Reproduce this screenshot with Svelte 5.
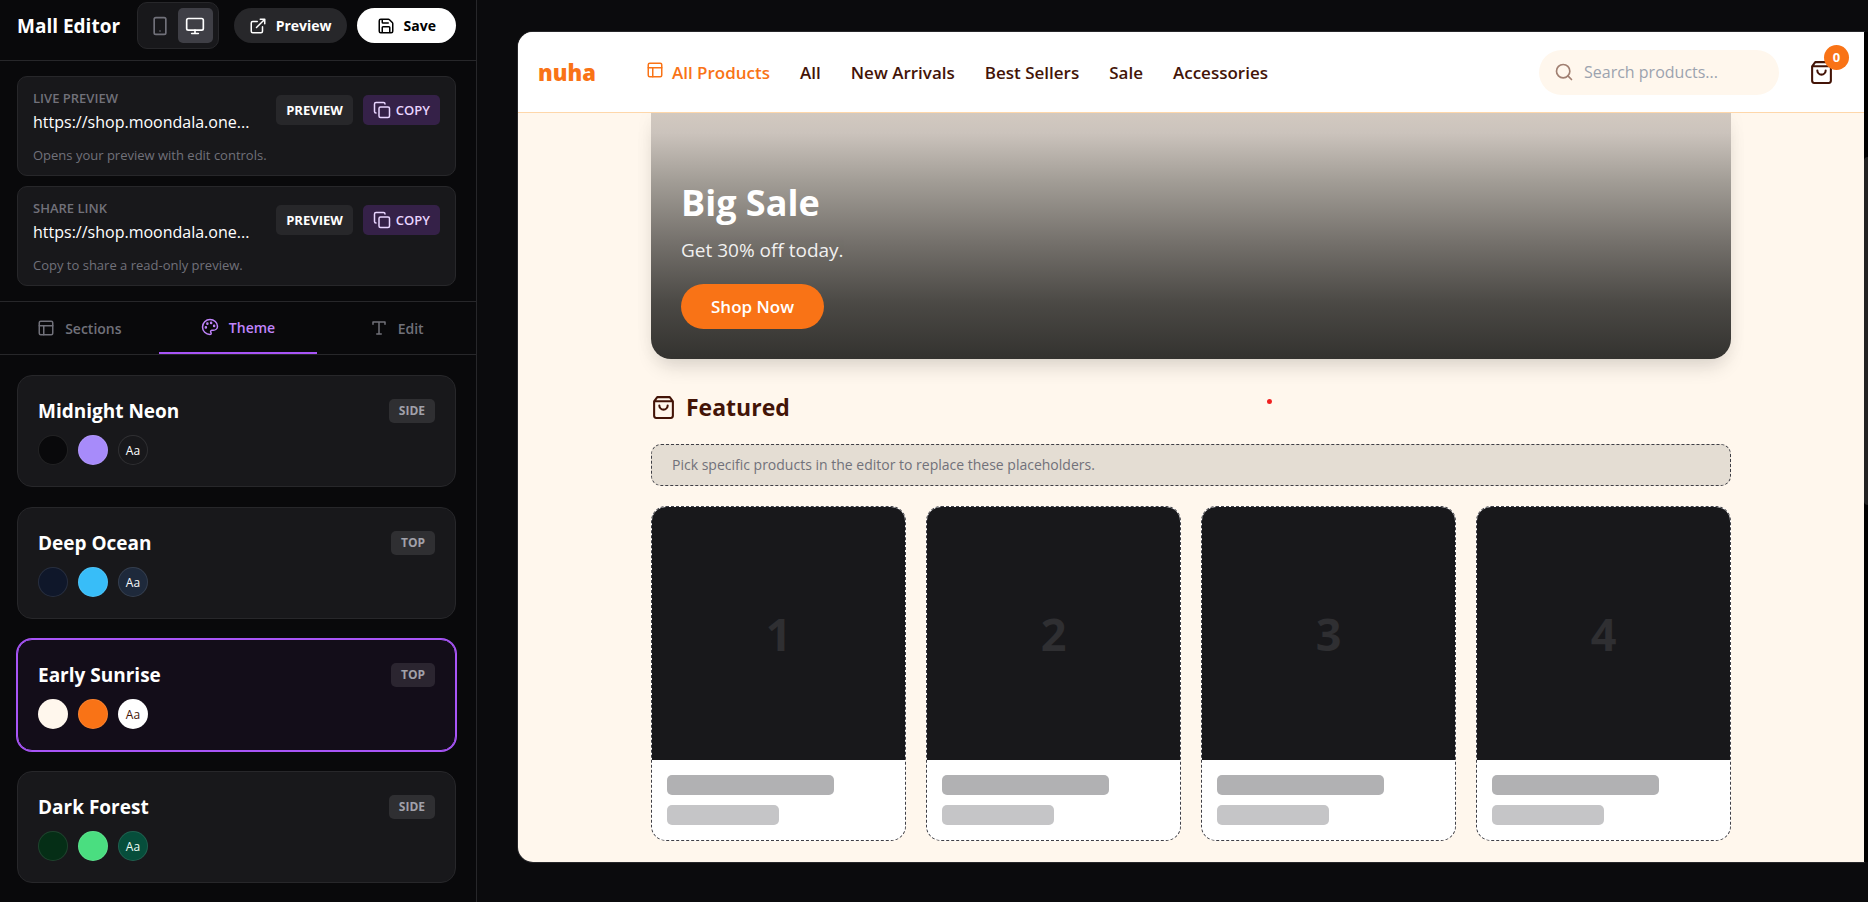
<script>
  const links = [
    { id: 'live', label: 'LIVE PREVIEW', url: 'https://shop.moondala.one...', note: 'Opens your preview with edit controls.' },
    { id: 'share', label: 'SHARE LINK', url: 'https://shop.moondala.one...', note: 'Copy to share a read-only preview.' }
  ];
  const themes = [
    { name: 'Midnight Neon', layout: 'SIDE', bg: '#09090b', primary: '#a78bfa', card: '#18181b', text: '#ffffff' },
    { name: 'Deep Ocean', layout: 'TOP', bg: '#0f172a', primary: '#38bdf8', card: '#1e293b', text: '#f8fafc' },
    { name: 'Early Sunrise', layout: 'TOP', bg: '#fff7ed', primary: '#f97316', card: '#ffffff', text: '#431407' },
    { name: 'Dark Forest', layout: 'SIDE', bg: '#052e16', primary: '#4ade80', card: '#064e3b', text: '#ecfdf5' }
  ];
  const nav = ['All', 'New Arrivals', 'Best Sellers', 'Sale', 'Accessories'];
  const slots = [1, 2, 3, 4];
  let selected = $state('Early Sunrise');
</script>

{#snippet layoutIcon(size)}
  <svg width={size} height={size} viewBox="0 0 24 24"><rect x="3" y="3" width="18" height="18" rx="2" /><path d="M3 9h18M9 21V9" /></svg>
{/snippet}

{#snippet bagIcon()}
  <svg width="25" height="25" viewBox="0 0 24 24"><path d="M6 2 3 6v14a2 2 0 0 0 2 2h14a2 2 0 0 0 2-2V6l-3-4ZM3 6h18M16 10a4 4 0 0 1-8 0" /></svg>
{/snippet}

<div class="app">
  <aside class="sidebar">
    <header class="toolbar">
      <h1>Mall Editor</h1>
      <div class="devices">
        <button class="device" aria-label="Mobile view">
          <svg width="20" height="20" viewBox="0 0 24 24"><rect x="5" y="2" width="14" height="20" rx="2" /><path d="M12 18h.01" /></svg>
        </button>
        <button class="device on" aria-label="Desktop view">
          <svg width="20" height="20" viewBox="0 0 24 24"><rect x="2" y="3" width="20" height="14" rx="2" /><path d="M8 21h8M12 17v4" /></svg>
        </button>
      </div>
      <div class="actions">
        <button class="pill">
          <svg width="18" height="18" viewBox="0 0 24 24"><path d="M15 3h6v6M10 14 21 3M18 13v6a2 2 0 0 1-2 2H5a2 2 0 0 1-2-2V8a2 2 0 0 1 2-2h6" /></svg>
          Preview
        </button>
        <button class="pill save">
          <svg width="18" height="18" viewBox="0 0 24 24"><path d="M15.2 3a2 2 0 0 1 1.4.6l3.8 3.8a2 2 0 0 1 .6 1.4V19a2 2 0 0 1-2 2H5a2 2 0 0 1-2-2V5a2 2 0 0 1 2-2zM17 21v-7a1 1 0 0 0-1-1H8a1 1 0 0 0-1 1v7M7 3v4a1 1 0 0 0 1 1h7" /></svg>
          Save
        </button>
      </div>
    </header>

    <section class="links">
      {#each links as link (link.id)}
        <article class="link-card">
          <div class="link-row">
            <div class="link-text">
              <div class="link-label">{link.label}</div>
              <div class="link-url">{link.url}</div>
            </div>
            <a class="chip open" href="#preview">PREVIEW</a>
            <button class="chip copy">
              <svg width="18" height="18" viewBox="0 0 24 24"><rect x="8" y="8" width="14" height="14" rx="2" /><path d="M4 16c-1.100 0-2-.9-2-2V4c0-1.100.9-2 2-2h10c1.100 0 2 .9 2 2" /></svg>
              COPY
            </button>
          </div>
          <p>{link.note}</p>
        </article>
      {/each}
    </section>

    <nav class="tabs">
      <button class="tab">{@render layoutIcon(18)}Sections</button>
      <button class="tab on">
        <svg width="18" height="18" viewBox="0 0 24 24"><circle cx="13.5" cy="6.500" r=".7" /><circle cx="17.500" cy="10.500" r=".7" /><circle cx="8.500" cy="7.500" r=".7" /><circle cx="6.500" cy="12.500" r=".7" /><path d="M12 2C6.500 2 2 6.500 2 12s4.500 10 10 10c.926 0 1.648-.746 1.648-1.688 0-.437-.18-.835-.437-1.125-.29-.289-.438-.652-.438-1.125a1.640 1.640 0 0 1 1.668-1.668h1.996c3.051 0 5.555-2.503 5.555-5.554C21.965 6.012 17.461 2 12 2z" /></svg>
        Theme
      </button>
      <button class="tab">
        <svg width="18" height="18" viewBox="0 0 24 24"><path d="M4 7V4h16v3M9 20h6M12 4v16" /></svg>
        Edit
      </button>
    </nav>

    <section class="themes">
      {#each themes as theme (theme.name)}
        <button class="theme" class:on={selected === theme.name} onclick={() => (selected = theme.name)}>
          <span class="theme-head">
            <span class="theme-name">{theme.name}</span>
            <span class="badge">{theme.layout}</span>
          </span>
          <span class="swatches">
            <span class="swatch" style:background={theme.bg}></span>
            <span class="swatch" style:background={theme.primary}></span>
            <span class="swatch" style:background={theme.card} style:color={theme.text}>Aa</span>
          </span>
        </button>
      {/each}
    </section>
  </aside>

  <main class="stage">
    <div class="shop">
      <header class="shop-bar">
        <a class="brand" href="#home">nuha</a>
        <nav class="shop-nav">
          <a class="on" href="#all-products">{@render layoutIcon(18)}All Products</a>
          {#each nav as item (item)}
            <a href="#{item}">{item}</a>
          {/each}
        </nav>
        <label class="search">
          <svg width="20" height="20" viewBox="0 0 24 24"><circle cx="11" cy="11" r="8" /><path d="m21 21-4.300-4.300" /></svg>
          <input type="text" aria-label="Search products" placeholder="Search products..." />
        </label>
        <button class="cart" aria-label="Cart">
          {@render bagIcon()}
          <span class="count">0</span>
        </button>
      </header>

      <div class="content">
        <section class="hero">
          <h2>Big Sale</h2>
          <p>Get 30% off today.</p>
          <button class="cta">Shop Now</button>
        </section>

        <section class="featured">
          <h3>{@render bagIcon()}Featured</h3>
          <div class="hint">Pick specific products in the editor to replace these placeholders.</div>
          <div class="grid">
            {#each slots as slot (slot)}
              <article class="product">
                <div class="thumb">{slot}</div>
                <div class="lines">
                  <div class="line"></div>
                  <div class="line short"></div>
                </div>
              </article>
            {/each}
          </div>
        </section>
      </div>
      <span class="dot"></span>
    </div>
    <div class="scroll-track"><div class="scroll-thumb"></div></div>
  </main>
</div>

<style>
  :global(body) {
    margin: 0;
    background: #09090b;
  }
  .app {
    display: flex;
    height: 100vh;
    overflow: hidden;
    background: #09090b;
    color: #fff;
    font-family: 'Segoe UI', 'Open Sans', 'Noto Sans', sans-serif;
    font-size: 16px;
  }
  .app * {
    box-sizing: border-box;
  }
  button,
  input {
    font: inherit;
    color: inherit;
    border: 0;
    background: none;
    padding: 0;
  }
  button {
    cursor: pointer;
  }
  a {
    color: inherit;
    text-decoration: none;
  }
  h1, h2, h3, p {
    margin: 0;
  }
  svg {
    flex: none;
    fill: none;
    stroke: currentColor;
    stroke-width: 2;
    stroke-linecap: round;
    stroke-linejoin: round;
  }

  .sidebar {
    flex: none;
    width: 477px;
    border-right: 1px solid #27272a;
    display: flex;
    flex-direction: column;
  }
  .toolbar {
    flex: none;
    height: 61px;
    padding: 0 20px 9px 17px;
    border-bottom: 1px solid #27272a;
    display: flex;
    align-items: center;
  }
  h1 {
    font-size: 19px;
    line-height: 28px;
    font-weight: 700;
    white-space: nowrap;
    flex: 1;
  }
  .devices {
    display: flex;
    padding: 5px;
    margin-right: 15px;
    border: 1px solid #27272a;
    border-radius: 10px;
    background: #18181b;
  }
  .device {
    width: 35px;
    height: 35px;
    display: grid;
    place-items: center;
    border-radius: 5px;
    color: #71717a;
  }
  .device.on {
    background: #3f3f46;
    color: #fff;
  }
  .actions {
    display: flex;
    gap: 10px;
  }
  .pill {
    height: 35px;
    padding: 0 15px;
    display: flex;
    align-items: center;
    gap: 9px;
    border-radius: 18px;
    background: #27272a;
    font-size: 14px;
    font-weight: 700;
  }
  .pill.save {
    padding: 0 20px;
    background: #fff;
    color: #000;
  }

  .links {
    padding: 15px 20px 15px 17px;
    display: flex;
    flex-direction: column;
    gap: 10px;
    border-bottom: 1px solid #27272a;
  }
  .link-card {
    height: 100px;
    padding: 11px 15px 0;
    border: 1px solid #27272a;
    border-radius: 10px;
    background: #18181b;
  }
  .link-row {
    display: flex;
    align-items: flex-start;
    gap: 10px;
  }
  .link-text {
    flex: 1;
    min-width: 0;
  }
  .link-label {
    font-size: 13px;
    line-height: 20px;
    font-weight: 600;
    color: #71717a;
  }
  .link-url {
    font-size: 16px;
    line-height: 28px;
    white-space: nowrap;
  }
  .chip {
    height: 30px;
    margin-top: 7px;
    padding: 0 10px;
    display: flex;
    align-items: center;
    gap: 5px;
    border-radius: 5px;
    background: #27272a;
    font-size: 13px;
    font-weight: 600;
  }
  .chip.open {
    font-weight: 700;
  }
  .chip.copy {
    background: #352148;
    color: #e9d5ff;
  }
  .link-card p {
    margin-top: 9px;
    font-size: 13px;
    line-height: 20px;
    color: #71717a;
  }

  .tabs {
    display: flex;
    height: 53px;
    flex: none;
    border-bottom: 1px solid #27272a;
  }
  .tab {
    flex: 1;
    display: flex;
    align-items: center;
    justify-content: center;
    gap: 10px;
    font-size: 14px;
    font-weight: 600;
    color: #71717a;
  }
  .tab.on {
    color: #c084fc;
    border-bottom: 2px solid #a855f7;
  }

  .themes {
    flex: 1;
    min-height: 0;
    overflow: hidden;
    padding: 20px 20px 0 17px;
    display: flex;
    flex-direction: column;
    gap: 20px;
  }
  .theme {
    flex: none;
    height: 112px;
    padding: 0 20px;
    border: 1px solid #27272a;
    border-radius: 15px;
    background: #18181b;
    display: flex;
    flex-direction: column;
    justify-content: center;
    gap: 10px;
  }
  .theme.on {
    background: #130d19;
    border-color: #a855f7;
    box-shadow: 0 0 0 1px #a855f7;
  }
  .theme-head {
    display: flex;
    justify-content: space-between;
    align-items: center;
  }
  .theme-name {
    font-size: 19px;
    line-height: 28px;
    font-weight: 700;
  }
  .badge {
    height: 24px;
    padding: 0 10px;
    border-radius: 5px;
    background: rgb(255 255 255 / 10%);
    color: #a1a1aa;
    font-size: 12px;
    line-height: 24px;
    font-weight: 700;
  }
  .swatches {
    display: flex;
    gap: 10px;
  }
  .swatch {
    width: 30px;
    height: 30px;
    border: 1px solid rgb(255 255 255 / 10%);
    border-radius: 50%;
    display: grid;
    place-items: center;
    font-size: 12px;
  }

  .stage {
    flex: 1;
    min-width: 0;
    padding: 32px 0 40px 41px;
    display: flex;
    background: #0b0b0d;
  }
  .shop {
    position: relative;
    flex: 1;
    min-width: 0;
    overflow: hidden;
    border-radius: 15px 0 0 15px;
    background: #fff7ed;
    box-shadow: 0 0 0 1px #27272a;
    color: #431407;
    display: flex;
    flex-direction: column;
  }
  .scroll-track {
    position: relative;
    flex: none;
    width: 4px;
    padding-top: 125px;
    background: #000;
  }
  .scroll-thumb {
    height: 348px;
    border-radius: 4px 0 0 4px;
    background: #222;
  }
  .shop-bar {
    position: relative;
    z-index: 1;
    flex: none;
    height: 81px;
    padding: 0 20px;
    border-bottom: 1px solid #fed7aa;
    background: #fff;
    display: flex;
    align-items: center;
  }
  .brand {
    font-size: 22px;
    font-weight: 800;
    color: #f97316;
    margin-right: 50px;
  }
  .shop-nav {
    flex: 1;
    display: flex;
    gap: 30px;
    font-size: 17px;
    font-weight: 600;
    white-space: nowrap;
  }
  .shop-nav a {
    display: flex;
    align-items: center;
    gap: 8px;
  }
  .shop-nav .on {
    color: #f97316;
  }
  .shop-nav :global(svg) {
    margin-bottom: 4px;
  }
  .search {
    width: 240px;
    height: 45px;
    padding: 0 15px;
    display: flex;
    align-items: center;
    gap: 10px;
    border-radius: 23px;
    background: #fff7ed;
    color: #a18072;
  }
  .search input {
    width: 100%;
    min-width: 0;
    font-size: 16px;
    outline: 0;
  }
  .search input::placeholder {
    color: #9ca3af;
    opacity: 1;
  }
  .cart {
    position: relative;
    display: flex;
    margin: 0 10px 0 30px;
  }
  .count {
    position: absolute;
    top: -15px;
    right: -15px;
    width: 25px;
    height: 25px;
    border-radius: 50%;
    background: #f97316;
    color: #fff;
    font-size: 13px;
    line-height: 25px;
    font-weight: 700;
  }

  .content {
    width: 1080px;
    max-width: 100%;
    margin: 0 auto;
  }
  .hero {
    height: 246px;
    padding: 0 30px 30px;
    display: flex;
    flex-direction: column;
    justify-content: flex-end;
    align-items: flex-start;
    border-radius: 0 0 20px 20px;
    background: linear-gradient(#d2c9c0, #cbc3bc 20px, #a29d96 68px, #74706b 130px, #4b4945 190px, #33322f);
    box-shadow: 0 12px 20px -5px rgb(0 0 0 / 14%), 0 0 20px rgb(0 0 0 / 4%);
    color: #fff;
  }
  h2 {
    font-size: 36px;
    line-height: 46px;
    font-weight: 700;
  }
  .hero p {
    margin: 10px 0 20px;
    font-size: 19px;
    line-height: 28px;
    opacity: .9;
  }
  .cta {
    height: 45px;
    padding: 0 30px;
    border-radius: 23px;
    background: #f97316;
    font-size: 17px;
    font-weight: 600;
  }
  .featured {
    padding-top: 30px;
  }
  h3 {
    display: flex;
    align-items: center;
    gap: 10px;
    font-size: 23px;
    line-height: 36px;
    font-weight: 700;
  }
  .hint {
    margin: 19px 0 20px;
    height: 42px;
    padding: 0 20px;
    border: 1px dashed #3f3f46;
    border-radius: 10px;
    background: #e4ddd3;
    color: #71717a;
    font-size: 14px;
    line-height: 40px;
  }
  .grid {
    display: grid;
    grid-template-columns: repeat(4, 1fr);
    gap: 20px;
  }
  .product {
    overflow: hidden;
    border: 1px dashed #3f3f46;
    border-radius: 15px;
    background: #fff;
  }
  .thumb {
    aspect-ratio: 1;
    display: grid;
    place-items: center;
    background: #18181b;
    color: #2f2f32;
    font-size: 45px;
    font-weight: 700;
  }
  .lines {
    padding: 15px;
    display: flex;
    flex-direction: column;
    gap: 10px;
  }
  .line {
    width: 75%;
    height: 20px;
    border-radius: 5px;
    background: #b1b1b3;
  }
  .line.short {
    width: 50%;
    background: #c5c5c7;
  }
  .dot {
    position: absolute;
    left: 749px;
    top: 367px;
    width: 5px;
    height: 5px;
    border-radius: 50%;
    background: #f02020;
  }
</style>
